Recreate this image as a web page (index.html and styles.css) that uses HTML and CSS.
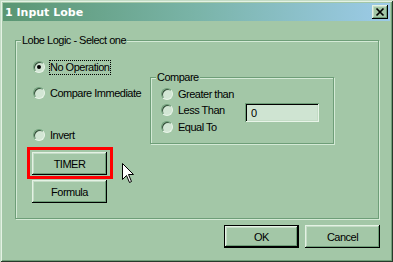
FILE: index.html
```html
<!DOCTYPE html>
<html lang="en">
<head>
  <meta charset="UTF-8">
  <title>1 Input Lobe</title>
  <link rel="stylesheet" href="styles.css">
</head>
<body>
  <div class="window">
    <div class="titlebar">
      <span class="title">1 Input Lobe</span>
      <button class="close" title="Close">
        <svg width="16" height="14" viewBox="0 0 16 14"><path d="M4.5 3.5 L11.5 10.5 M11.5 3.5 L4.5 10.5" stroke="#000" stroke-width="1.7" fill="none"/></svg>
      </button>
    </div>

    <div class="dialog-body">
      <div class="group main-group">
        <span class="group-label">Lobe Logic - Select one</span>
        <div class="logic">
          <div class="left-col">
            <label class="radio"><span class="dot checked"></span><span class="txt focused">No Operation</span></label>
            <label class="radio row-imm"><span class="dot"></span><span class="txt">Compare Immediate</span></label>
            <label class="radio row-invert"><span class="dot"></span><span class="txt">Invert</span></label>
            <button class="btn timer">TIMER</button>
            <button class="btn formula">Formula</button>
          </div>

          <div class="group compare">
            <span class="group-label">Compare</span>
            <div class="compare-opts">
              <label class="radio"><span class="dot"></span><span class="txt">Greater than</span></label>
              <label class="radio"><span class="dot"></span><span class="txt">Less Than</span></label>
              <label class="radio row-eq"><span class="dot"></span><span class="txt">Equal To</span></label>
            </div>
            <input class="value-box" type="text" value="0" readonly>
          </div>
        </div>
      </div>

      <div class="actions">
        <button class="btn default">OK</button>
        <button class="btn">Cancel</button>
      </div>
    </div>

    <!-- annotation + mouse pointer over the dialog -->
    <div class="highlight"></div>
    <svg class="pointer" width="13" height="22" viewBox="0 0 13 22">
      <path d="M0.5 0.5 L0.5 16.5 L4.5 12.5 L7.5 19.5 L9.5 18.5 L6.5 11.5 L11.5 11.5 Z" fill="#fff" stroke="#000" stroke-width="1"/>
    </svg>
  </div>
</body>
</html>
```

FILE: styles.css
```css
html, body { margin: 0; padding: 0; }
body {
  font-family: "Liberation Sans", Arial, sans-serif;
  font-size: 11px;
  letter-spacing: -0.5px;
  color: #000;
  background: #a3c7a7;
}

.window {
  position: relative;
  width: 393px; height: 262px;
  box-sizing: border-box;
  padding: 3px;
  background: #a3c7a7;
  box-shadow: inset 1px 1px #c4dcc6, inset -1px -1px #263a2a,
              inset 2px 2px #e4f2e4, inset -2px -2px #6e9e78;
}

.titlebar {
  height: 18px;
  display: flex; align-items: center; justify-content: space-between;
  padding: 0 2px;
  background: linear-gradient(to right, #5a9672, #7ab4a8 50%, #9ccbe8);
}
.title {
  color: #fff;
  font-family: "DejaVu Sans", sans-serif;
  font-weight: bold; font-size: 11px;
  letter-spacing: 0;
}
.close {
  width: 16px; height: 14px;
  padding: 0; border: none;
  display: flex;
  background: #a3c7a7;
  box-shadow: inset -1px -1px #000, inset 1px 1px #e4f2e4,
              inset -2px -2px #6e9e78, inset 2px 2px #c4dcc6;
}

.dialog-body { padding: 19px 11px 0 12px; }

.group {
  position: relative;
  box-sizing: border-box;
  border: 1px solid #6e9e78;
  box-shadow: inset 1px 1px #d4ead6, 1px 1px #d4ead6;
}
.group-label {
  position: absolute; top: -7px; left: 5px;
  padding: 0 1px;
  line-height: 13px;
  background: #a3c7a7;
  white-space: nowrap;
}
.main-group { height: 179px; }

.logic { display: flex; padding: 18px 0 0 17px; }
.left-col { width: 117px; display: flex; flex-direction: column; align-items: flex-start; }

.radio {
  display: flex; align-items: center; gap: 5px;
  height: 16px;
  white-space: nowrap;
}
.dot {
  width: 12px; height: 12px;
  box-sizing: border-box;
  border-radius: 50%;
  background: #d2e6d4;
  border: 1px solid;
  border-color: #6e9e78 #e8f4e8 #e8f4e8 #6e9e78;
  box-shadow: inset 1px 1px #34503a;
  display: flex; align-items: center; justify-content: center;
}
.dot.checked::after {
  content: "";
  width: 4px; height: 4px;
  border-radius: 50%;
  background: #000;
}
.txt { line-height: 13px; }
.txt.focused {
  border: 1px dotted #000;
  margin-left: -1px;
  padding-right: 1px;
}
.row-imm { margin-top: 10px; }
.row-invert { margin-top: 26px; }

.btn {
  width: 75px; height: 23px;
  box-sizing: border-box;
  padding: 0; border: none;
  font: inherit; letter-spacing: inherit; color: #000;
  background: #a3c7a7;
  box-shadow: inset -1px -1px #000, inset 1px 1px #e4f2e4,
              inset -2px -2px #6e9e78, inset 2px 2px #c4dcc6;
}
.btn.timer { margin: 9px 0 0 -1px; }
.btn.formula { margin: 5px 0 0 -1px; }
.btn.default {
  border: 1px solid #000;
  box-shadow: inset -1px -1px #000, inset 1px 1px #e4f2e4,
              inset -2px -2px #6e9e78, inset 2px 2px #c4dcc6;
}

.compare {
  width: 184px; height: 67px;
  margin-top: 18px;
  display: flex; align-items: flex-start;
  padding: 8px 0 0 10px;
}
.compare-opts { width: 84px; display: flex; flex-direction: column; }
.row-eq { margin-top: 1px; }

.value-box {
  width: 74px; height: 19px;
  box-sizing: border-box;
  margin-top: 17px;
  padding: 0 0 0 6px;
  border: none; outline: none;
  font: inherit; color: #000;
  background: #cfe4d2;
  box-shadow: inset 1px 1px #6e9e78, inset -1px -1px #e8f4e8,
              inset 2px 2px #000, inset -2px -2px #c4dcc6;
}

.actions {
  display: flex; justify-content: flex-end; gap: 6px;
  margin: 6px -1px 0 0;
}

.highlight {
  position: absolute; left: 27px; top: 147px;
  width: 86px; height: 32px;
  box-sizing: border-box;
  border: 3px solid #f00;
}
.pointer { position: absolute; left: 122px; top: 163px; }
```
